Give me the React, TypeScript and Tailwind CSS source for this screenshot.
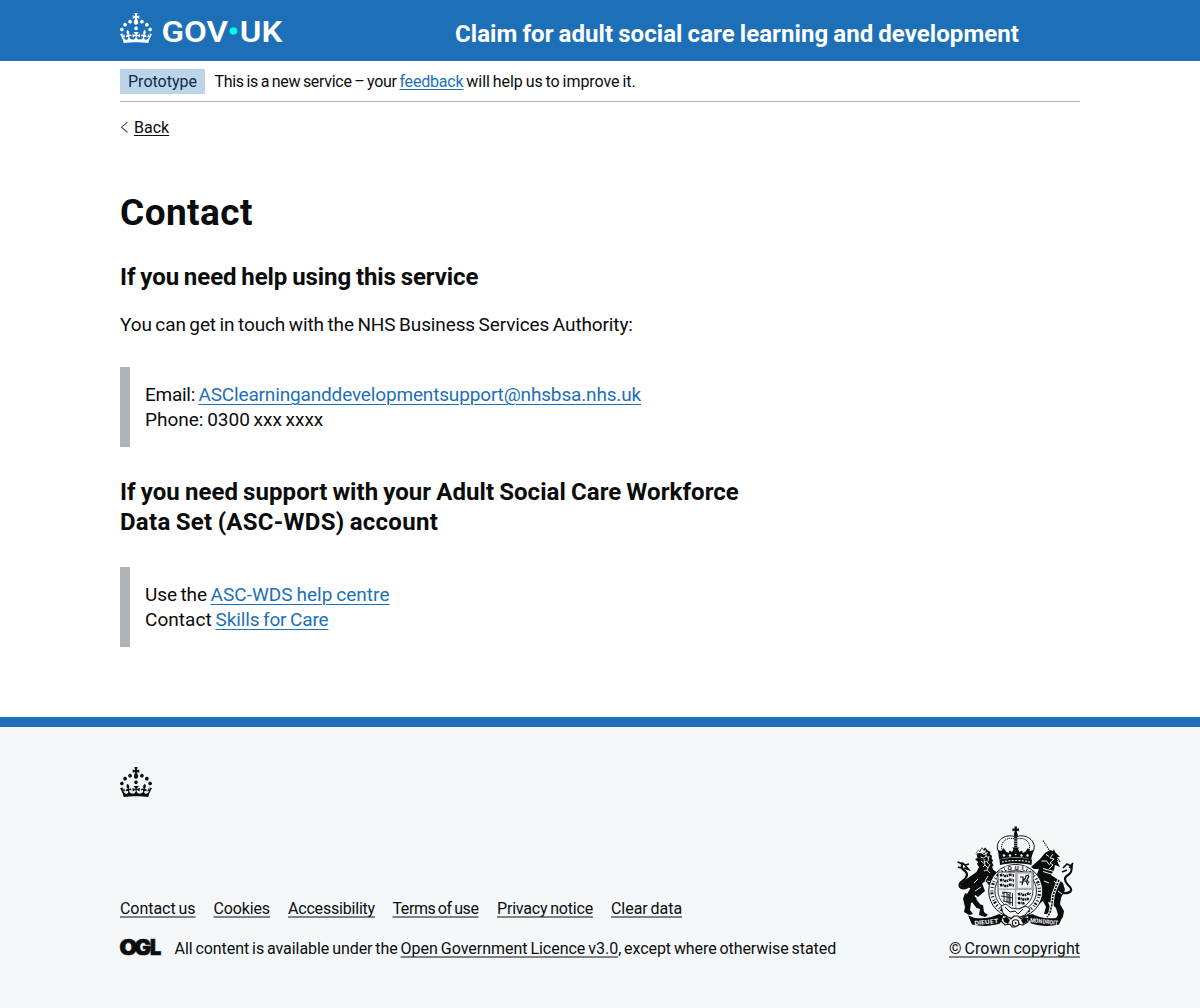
import type { ReactNode } from "react";

const CROWN =
  "M22.6 10.4c-1 .4-2-.1-2.4-1-.4-.9.1-2 1-2.4.9-.4 2 .1 2.4 1s-.1 2-1 2.4m-5.9 6.7c-.9.4-2-.1-2.4-1-.4-.9.1-2 1-2.4.9-.4 2 .1 2.4 1s-.1 2-1 2.4m10.8-3.7c-1 .4-2-.1-2.4-1-.4-.9.1-2 1-2.4.9-.4 2 .1 2.4 1s0 2-1 2.4m3.3 4.8c-1 .4-2-.1-2.4-1-.4-.9.1-2 1-2.4.9-.4 2 .1 2.4 1s-.1 2-1 2.4M17 4.7l2.3 1.2V2.5l-2.3.7-.2-.2.9-3h-3.4l.9 3-.2.2c-.1.1-2.3-.7-2.3-.7v3.4L15 4.7c.1.1.1.2.2.2l-1.3 4c-.1.2-.1.4-.1.6 0 1.1.8 2 1.9 2.2h.7c1-.2 1.9-1.1 1.9-2.1 0-.2 0-.4-.1-.6l-1.3-4c-.1-.2 0-.2.1-.3m-7.6 5.7c.9.4 2-.1 2.4-1 .4-.9-.1-2-1-2.4-.9-.4-2 .1-2.4 1s0 2 1 2.4m-5 3c.9.4 2-.1 2.4-1 .4-.9-.1-2-1-2.4-.9-.4-2 .1-2.4 1s.1 2 1 2.4m-3.2 4.8c.9.4 2-.1 2.4-1 .4-.9-.1-2-1-2.4-.9-.4-2 .1-2.4 1s0 2 1 2.4m14.8 11c4.4 0 8.6.3 12.3.8 1.1-4.5 2.4-7 3.7-8.8l-2.5-.9c.2 1.3.3 1.9 0 2.7-.4-.4-.8-1.1-1.1-2.3l-1.2 4c.7-.5 1.3-.8 2-.9-1.1 2.5-2.6 3.1-3.5 3-1.1-.2-1.7-1.2-1.5-2.1.3-1.2 1.5-1.5 2.1-.1 1.1-2.3-.8-3-2-2.3 1.9-1.9 2.1-3.5.6-5.6-2.1 1.6-2.1 3.2-1.2 5.5-1.2-1.4-3.2-.6-2.5 1.6.9-1.4 2.1-.5 1.9.8-.2 1.1-1.7 2.1-3.5 1.9-2.7-.2-2.9-2.1-2.9-3.6.7-.1 1.9.5 2.9 1.9l.4-4.3c-1.1 1.1-2.1 1.4-3.2 1.4.4-1.2 2.1-3 2.1-3h-5.4s1.7 1.9 2.1 3c-1.1 0-2.1-.2-3.2-1.4l.4 4.3c1-1.4 2.2-2 2.9-1.9-.1 1.5-.2 3.4-2.9 3.6-1.9.2-3.4-.8-3.5-1.9-.2-1.3 1-2.2 1.9-.8.7-2.3-1.2-3-2.5-1.6.9-2.2.9-3.9-1.2-5.5-1.5 2-1.3 3.7.6 5.6-1.2-.7-3.1 0-2 2.3.6-1.4 1.8-1.1 2.1.1.2.9-.3 1.9-1.5 2.1-.9.2-2.4-.5-3.5-3 .6 0 1.2.3 2 .9l-1.2-4c-.3 1.1-.7 1.9-1.1 2.3-.3-.8-.2-1.4 0-2.7l-2.9.9C1.3 23 2.6 25.5 3.7 30c3.7-.5 7.9-.8 12.3-.8";

function Crown({ className = "" }: { className?: string }) {
  return (
    <svg className={className} width="32" height="30" viewBox="0 0 32 30" fill="currentColor" aria-hidden="true">
      <path fillRule="evenodd" d={CROWN} />
    </svg>
  );
}

function GovUkLogo() {
  return (
    <svg width="162" height="36" viewBox="0 0 162 36" fill="currentColor" className="overflow-visible" role="img" aria-label="GOV.UK">
      <path fillRule="evenodd" d={CROWN} />
      <g className="font-[Roboto,sans-serif] text-[30px] font-semibold">
        <text x="41.5" y="28.6" textLength="66.5" lengthAdjust="spacingAndGlyphs">GOV</text>
        <text x="119.800" y="28.6" textLength="42.500" lengthAdjust="spacingAndGlyphs">UK</text>
      </g>
      <circle cx="113.5" cy="18" r="3.8" fill="#00ffe0" />
    </svg>
  );
}

function OglLogo() {
  return (
    <svg width="41" height="17" viewBox="0 0 41 17" fill="currentColor" className="overflow-visible" aria-label="Open Government Licence">
      <g className="font-[Inter,sans-serif] text-[21px] font-black" stroke="currentColor" strokeWidth=".7">
        <text x="-0.6" y="16.300" textLength="17.800" lengthAdjust="spacingAndGlyphs">O</text>
        <text x="14.500" y="16.300" textLength="16.600" lengthAdjust="spacingAndGlyphs">G</text>
        <text x="30" y="16.300" textLength="11.200" lengthAdjust="spacingAndGlyphs">L</text>
      </g>
    </svg>
  );
}

function RoyalArms() {
  const ink = "#0b0c0c";
  const paper = "#f4f8fb";
  return (
    <svg width="125" height="102" viewBox="0 0 125 102" fill={ink} className="overflow-visible" aria-hidden="true">
      {/* crown */}
      <path d="M61.4 .5h2.8l-.5 2.200 2.300-.5v3l-2.300-.5.6 3.300h-3.200l.6-3.300-2.300.5v-3l2.300.5z" />
      <circle cx="62.800" cy="9" r="2" />
      <g fill="none" stroke={ink} strokeWidth="1">
        <path d="M47 28c-7-9 1-17.500 8-18 4-.5 6 0 7.500 1.500 2-1.500 4-2 8-1.500 7 .5 15 9 8 18" />
        <path d="M49.500 25c-3-7 2-12 7-12.500 3 0 5 0 6.200 1 1.500-1 3-1 6-1 5 .5 10 5.500 7 12.500" strokeDasharray="1.300 .7" />
        <path d="M62.700 11v14" strokeWidth="3.200" strokeDasharray="1.600 .6" />
      </g>
      <path d="M45 24l3.500 1 2-3 2.500 3.500 2.500 1.500 1-2.500 2.500 1.500 1.500-3-1.500-1.500h7.500l-1.500 1.500 1.500 3 2.500-1.500 1 2.500 2.500-1.500 2.500-3.500 2 3 3.500-1-2.500 9.500c-10-3-22-3-32 0z" />
      <path d="M46.500 33.500c9-2.500 23-2.500 32.500 0l-.5 5.500c-9-2.500-22.500-2.500-31.500 0z" />
      <g fill={paper}>
        <circle cx="51" cy="29.500" r="1.200" /><circle cx="57" cy="29.500" r="1.200" /><circle cx="62.700" cy="28.500" r=".8" />
        <circle cx="68.500" cy="29.500" r="1.200" /><circle cx="74.500" cy="29.500" r="1.200" />
      </g>
      <path d="M49 36c8-2 20-2 28 0" fill="none" stroke={paper} strokeWidth="1.100" strokeDasharray="2 1.300" />

      {/* lion */}
      <path d="M26 26l2-3 2.500 0 2-1.500 1.500 2.500 3.500 2-.5 2 2 2-.5 2 1.500 2.500-1 2 1.500 3-1.500 1.500 1.500 3 5 3.500-1.500 2.500 5.500 3-1 3-8-2 1 5 5 4-2 2-7-4-5-6-4 3-3 7-4 5 3 5 4 5-1 3-4-1-6-8-1-5 3-6-6-2-5 1-1-4 6-5 10-7 2.500-5-2-3 1-2-3-3 2.500-1-1-4z" />
      <path d="M15 61c-8 4-11-2-6-5.500 6-4.500 6-8 3-10.500-4-2-4-5-2-8.500" fill="none" stroke={ink} strokeWidth="2.200" />
      <path d="M4.500 36l7 2.500 4 5-4.500-1.500M8 42l-3-1M12 39l4-1" fill="none" stroke={ink} strokeWidth="1.800" />
      <path d="M12 67l-2 6 2 8-1 5 5 3 4-1-3-4 1-7 6-5zM24 78l3 5-1 6 6 2 3-2-4-3-1-7z" />
      <path d="M20 58l-6 10 2 4 5-4 4 3 7-6-3-8z" />
      <g fill="none" stroke={paper} strokeWidth=".9">
        <path d="M28 26.500l3 2 4-2M27.500 31l3 1 3-2 2.500 3M28 35l2.500 2 3-2 2 3M30 41l2-2 3 3M31 45l3-1 3 3M33 26l0 5M36 30l-1 5M31 33l1 7M37 38l-3 6" />
        <path d="M35 50l-3 5M39 56l-5-1M28 61l-6 4M25 53l-4 4" />
      </g>
      <path d="M23 27.500l2-3 2 1 2-4 2 3 2-1 0 3" fill={paper} stroke={ink} strokeWidth=".8" strokeDasharray="1.500 .7" />

      {/* unicorn */}
      <path d="M90 14.500l6.500 10" fill="none" stroke={ink} strokeWidth="1.200" strokeDasharray="1.400 1" />
      <path d="M87 33l5-6 5-3 3 1 1-2 1 3 5 5-3 0 4 5-4-1 3 6-5-2-1 5-3 5 6 4 6 4 2 7-4 8-1 6 4 7-1 6-3 3-4-2 2-3-2-7-5-5-7-3-8 7 1-5 5-5-5-8-8-2-5 1-1-3 5-1-4-2 3-2 8 2 5-2-3-6 2-5-5 0-3-2z" />
      <path d="M109 67c9 1 12-3 6-8-4-4-4-8 0-10 5-3 3-6 4-11" fill="none" stroke={ink} strokeWidth="2.200" />
      <path d="M110 42l4-4 4 2 2-3M114 44l-5 2M116 41l3 1" fill="none" stroke={ink} strokeWidth="1.700" />
      <path d="M95 67l-5 8 3 6-2 7h5l1-7-2-5 7-7zM86 61l-5 6 3 3 6-5z" />
      <g fill="none" stroke={paper} strokeWidth="1">
        <path d="M88.500 35l5 0 3 4M93 28.500l3 2M100 28l-3 4 4 1-4 4 3 2-4 4M90 42.500l11 3M90 45.500l10 3M104 33l2 2" />
        <path d="M91 55l5 2M101 55l3 3M105 65l4 3" />
      </g>
      <path d="M106 54l-3 7-3 8-1 9-2 9-3 4" fill="none" stroke={paper} strokeWidth="3.400" />
      <path d="M106 54l-3 7-3 8-1 9-2 9-3 4" fill="none" stroke={ink} strokeWidth="1.600" strokeDasharray="2.200 1" />

      {/* garter and shield */}
      <ellipse cx="62.700" cy="65" rx="27" ry="26.500" fill={paper} stroke={ink} strokeWidth="1" />
      <ellipse cx="62.700" cy="65" rx="23.800" ry="23.400" fill="none" stroke={ink} strokeWidth="3.200" strokeDasharray="1 2.100 1.800 1.300 .8 2.600" />
      <ellipse cx="62.700" cy="65" rx="20.800" ry="20.400" fill={paper} stroke={ink} strokeWidth=".9" />
      <path d="M52 40.500c7-1.800 14-1.800 21 0v3.800c-7-1.400-14-1.400-21 0z" fill={paper} />
      <text x="54.500" y="44.300" className="font-[Roboto,sans-serif] text-[6px] font-bold" textLength="16">QUI</text>
      <path d="M45 46h35v18c0 11-7 17-17.500 20C52 81 45 75 45 64z" fill={paper} stroke={ink} strokeWidth=".8" />
      <g fill="none" stroke={ink} strokeWidth="2.600">
        <path d="M47 49.500c4-2 4 2 8 0s4 0 6 0M47 54.500c4-2 4 2 8 0s4 0 6 0M47 59.500c4-2 4 2 8 0s4 0 6 0" strokeDasharray="2.200 .6 1 .7" />
        <path d="M65 68.500c4-2 4 2 8 0s4 0 5 0M65 73c4-2 4 2 8 0h3M65 77.500c3-2 4 1 7-1" strokeDasharray="2.200 .6 1 .7" />
        <path d="M67 51h3l0 3 2-1 1-3 3-1M69 59l1-4 3 0 2 4M76 50l-2 4 2 3M66.500 56l4 0" strokeWidth="1.200" />
        <path d="M49 68l3-2 4 3v9M51 67v8M54 68v9M57 67v12M59.500 67v13M48 70l12 2M50 75l10 2M49 66l9 1" strokeWidth=".9" />
      </g>
      <path d="M62.700 46v37M45.500 63.300h34M64 47h15v15.500h-15z" fill="none" stroke="#a9adaf" strokeWidth="1.600" />

      {/* buckle, compartment and motto */}
      <path d="M48 80l5-2 5 4 8 1 7-3 4 3-5 6-8 3h-8l-6-5z" fill={paper} stroke={ink} strokeWidth=".9" />
      <path d="M52 81l5 5 5-1 3 3 5-5" fill="none" stroke={ink} strokeWidth="1" />
      <path d="M15 89.500l7 2.500c10 1 17-.5 24-4l5 2-4 7.500c-9 3-20 3-28 1z" />
      <path d="M110 89.500l-7 2.500c-10 1-17-.5-24-4l-5 2 4 7.500c9 3 20 3 28 1z" />
      <g fill={paper} className="font-[Roboto,sans-serif] text-[6px] font-bold">
        <text x="21.500" y="98" transform="rotate(-6 34 96)" textLength="24" lengthAdjust="spacingAndGlyphs">DIEU ET</text>
        <text x="77" y="97.500" transform="rotate(6 90 96)" textLength="28" lengthAdjust="spacingAndGlyphs">MON DROIT</text>
      </g>
      <path d="M50 89c3 2 6 1 8 4l3-3h4l3 3c2-3 5-2 8-4l-1 7-5 3-6-1-2 3h-3l-2-3-5 1-4-4z" fill={paper} stroke={ink} strokeWidth="1.100" />
      <path d="M50 92l4-1 3 3-2 4-4-2zM75 92l-4-1-3 3 2 4 4-2z" />
      <circle cx="62.600" cy="97" r="3.300" fill={paper} stroke={ink} strokeWidth="1.100" />
      <circle cx="62.600" cy="97" r="1" />
    </svg>
  );
}

function Link({ className = "", children }: { className?: string; children: ReactNode }) {
  return (
    <a href="#" className={`text-[#1d70b8] underline decoration-1 ${className}`}>
      {children}
    </a>
  );
}

function FooterLink({ className = "", children }: { className?: string; children: ReactNode }) {
  return (
    <a
      href="#"
      className={`underline decoration-[#808385] decoration-2 underline-offset-2 [text-decoration-skip-ink:none] ${className}`}
    >
      {children}
    </a>
  );
}

export default function App() {
  return (
    <div className="flex min-h-screen flex-col bg-white font-[Roboto,sans-serif] text-[#0b0c0c] [word-spacing:-1px]">
      <header className="h-[61px] bg-[#1d70b8] text-white">
        <div className="mx-auto flex w-[960px] items-start pt-[13px]">
          <GovUkLogo />
          <span className="ml-[173px] mt-[6px] whitespace-nowrap text-2xl leading-[30px] font-bold tracking-[0.067px]">
            Claim for adult social care learning and development
          </span>
        </div>
      </header>

      <div className="mx-auto w-[960px]">
        <div className="flex h-[41px] items-start border-b border-[#b1b4b6] pt-2 text-base">
          <strong className="h-[25px] w-[85px] bg-[#bbd4ea] text-center leading-[26px] font-normal text-[#0c2d4a]">
            Prototype
          </strong>
          <span className="ml-[9.500px] whitespace-nowrap leading-[26px]">
            <span className="tracking-[-0.3px]">This is a new service – your </span>
            <Link className="tracking-[-0.193px] underline-offset-2">feedback</Link>
            <span className="tracking-[-0.05px]"> will help us to improve it.</span>
          </span>
        </div>

        <a href="#" className="mt-4 flex h-5 items-center text-base leading-5">
          <svg width="14" height="12" viewBox="0 0 14 12" fill="none" stroke="#505a5f" strokeWidth="1.1" aria-hidden="true">
            <path d="M7.500 0 1.500 5.200l6 5.300" />
          </svg>
          <span className="underline decoration-1 underline-offset-2">Back</span>
        </a>

        <main className="w-[630px] pt-[55px]">
          <h1 className="text-[37px] leading-10 font-bold tracking-[0.43px]">Contact</h1>
          <h2 className="mt-[29px] text-2xl leading-[30px] font-bold tracking-[-0.08px]">
            If you need help using this service
          </h2>
          <p className="mt-5 text-[19px] leading-[25px] tracking-[-0.12px]">
            You can get in touch with the NHS Business Services Authority:
          </p>
          <div className="mt-[30px] h-20 border-l-10 border-[#b1b4b6] pt-[15px] pl-[15px] text-[19px] leading-[25px]">
            <p>
              <span className="tracking-[-0.27px]">Email: </span>
              <Link className="tracking-[-0.159px] underline-offset-[3px]">ASClearninganddevelopmentsupport@nhsbsa.nhs.uk</Link>
            </p>
            <p>Phone: 0300 xxx xxxx</p>
          </div>
          <h2 className="mt-[30px] text-2xl leading-[30px] font-bold">
            <span className="tracking-[0.067px]">If you need support with your Adult Social Care Workforce </span>
            <br />
            <span className="tracking-[0.277px]">Data Set (ASC-WDS) account</span>
          </h2>
          <div className="mt-[30px] h-20 border-l-10 border-[#b1b4b6] pt-[15px] pl-[15px] text-[19px] leading-[25px]">
            <p>
              <span className="tracking-[-0.11px]">Use the </span>
              <Link className="tracking-[0.04px] underline-offset-[3px]">ASC-WDS help centre</Link>
            </p>
            <p>
              <span className="tracking-[0.05px]">Contact </span>
              <Link className="tracking-[-0.13px] underline-offset-[3px]">Skills for Care</Link>
            </p>
          </div>
        </main>
      </div>

      <footer className="mt-[70px] flex-1 border-t-10 border-[#1d70b8] bg-[#f4f8fb]">
        <div className="mx-auto w-[960px] pt-10 text-base leading-5">
          <Crown />
          <div className="mt-[29px] flex items-end justify-between">
            <div>
              <ul className="flex gap-[18px] whitespace-nowrap">
                <li className="w-[75.500px]"><FooterLink className="tracking-[-0.05px]">Contact us</FooterLink></li>
                <li className="w-[56.500px]"><FooterLink className="tracking-[-0.129px]">Cookies</FooterLink></li>
                <li className="w-[86.500px]"><FooterLink className="tracking-[-0.196px]">Accessibility</FooterLink></li>
                <li className="w-[86.500px]"><FooterLink className="tracking-[-0.43px]">Terms of use</FooterLink></li>
                <li className="w-[96px]"><FooterLink className="tracking-[-0.19px]">Privacy notice</FooterLink></li>
                <li><FooterLink className="tracking-[-0.05px]">Clear data</FooterLink></li>
              </ul>
              <div className="mt-5 flex items-start whitespace-nowrap">
                <OglLogo />
                <span className="ml-[13.500px]">
                  <span className="tracking-[-0.06px]">All content is available under the </span>
                  <FooterLink className="tracking-[-0.02px]">Open Government Licence v3.0</FooterLink>
                  <span className="tracking-[-0.075px]">, except where otherwise stated</span>
                </span>
              </div>
            </div>
            <div className="flex w-[131px] flex-col">
              <div className="ml-1">
                <RoyalArms />
              </div>
              <FooterLink className="mt-[11px] whitespace-nowrap tracking-[0.03px]">© Crown copyright</FooterLink>
            </div>
          </div>
        </div>
      </footer>
    </div>
  );
}
